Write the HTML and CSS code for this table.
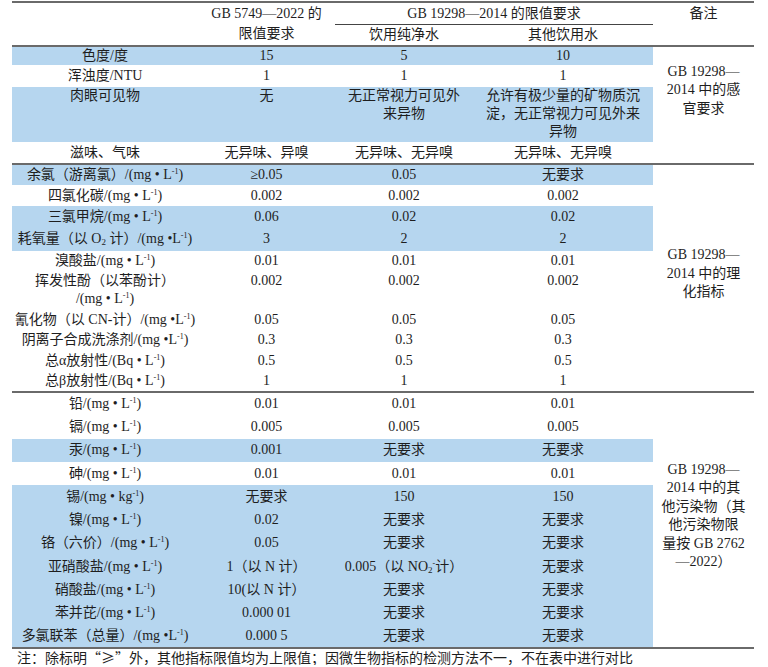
FILE: index.html
```html
<!DOCTYPE html>
<html lang="zh-CN">
<head>
<meta charset="utf-8">
<title>饮用水限值对比</title>
<link rel="stylesheet" href="styles.css">
</head>
<body>
<table class="cmp">
  <colgroup>
    <col class="c-item"><col class="c-gb5749"><col class="c-pure"><col class="c-other"><col class="c-note">
  </colgroup>
  <thead>
    <tr class="h1">
      <th rowspan="2"></th>
      <th rowspan="2" class="mid">GB 5749—2022 的<br>限值要求</th>
      <th colspan="2" class="group">GB 19298—2014 的限值要求</th>
      <th rowspan="2" class="top">备注</th>
    </tr>
    <tr class="h2">
      <th>饮用纯净水</th>
      <th>其他饮用水</th>
    </tr>
  </thead>
  <tbody class="grp">
    <tr class="blue r18"><td>色度/度</td><td>15</td><td>5</td><td>10</td>
      <td rowspan="3" class="remark">GB 19298—<br>2014 中的感<br>官要求</td></tr>
    <tr class="r22"><td>浑浊度/NTU</td><td>1</td><td>1</td><td>1</td></tr>
    <tr class="blue r55 topal"><td>肉眼可见物</td><td>无</td><td>无正常视力可见外<br>来异物</td><td>允许有极少量的矿物质沉<br>淀，无正常视力可见外来<br>异物</td></tr>
    <tr class="r22"><td>滋味、气味</td><td>无异味、异嗅</td><td>无异味、无异嗅</td><td>无异味、无异嗅</td><td class="remark"></td></tr>
  </tbody>
  <tbody class="grp">
    <tr class="blue r21"><td>余氯（游离氯）/(mg • L<sup>-1</sup>)</td><td>≥0.05</td><td>0.05</td><td>无要求</td>
      <td rowspan="10" class="remark">GB 19298—<br>2014 中的理<br>化指标</td></tr>
    <tr class="r21"><td>四氯化碳/(mg • L<sup>-1</sup>)</td><td>0.002</td><td>0.002</td><td>0.002</td></tr>
    <tr class="blue r21"><td>三氯甲烷/(mg • L<sup>-1</sup>)</td><td>0.06</td><td>0.02</td><td>0.02</td></tr>
    <tr class="blue r24"><td>耗氧量（以 O<sub>2</sub> 计）/(mg •L<sup>-1</sup>)</td><td>3</td><td>2</td><td>2</td></tr>
    <tr class="r19"><td>溴酸盐/(mg • L<sup>-1</sup>)</td><td>0.01</td><td>0.01</td><td>0.01</td></tr>
    <tr class="r40 topal2"><td>挥发性酚（以苯酚计）<br>/(mg • L<sup>-1</sup>)</td><td>0.002</td><td>0.002</td><td>0.002</td></tr>
    <tr class="r19"><td>氰化物（以 CN-计）/(mg •L<sup>-1</sup>)</td><td>0.05</td><td>0.05</td><td>0.05</td></tr>
    <tr class="r21"><td>阴离子合成洗涤剂/(mg •L<sup>-1</sup>)</td><td>0.3</td><td>0.3</td><td>0.3</td></tr>
    <tr class="r21"><td>总α放射性/(Bq • L<sup>-1</sup>)</td><td>0.5</td><td>0.5</td><td>0.5</td></tr>
    <tr class="r21"><td>总β放射性/(Bq • L<sup>-1</sup>)</td><td>1</td><td>1</td><td>1</td></tr>
  </tbody>
  <tbody class="grp">
    <tr class="r23"><td>铅/(mg • L<sup>-1</sup>)</td><td>0.01</td><td>0.01</td><td>0.01</td>
      <td rowspan="11" class="remark">GB 19298—<br>2014 中的其<br>他污染物（其<br>他污染物限<br>量按 GB 2762<br>—2022）</td></tr>
    <tr class="r23"><td>镉/(mg • L<sup>-1</sup>)</td><td>0.005</td><td>0.005</td><td>0.005</td></tr>
    <tr class="blue r23"><td>汞/(mg • L<sup>-1</sup>)</td><td>0.001</td><td>无要求</td><td>无要求</td></tr>
    <tr class="r23"><td>砷/(mg • L<sup>-1</sup>)</td><td>0.01</td><td>0.01</td><td>0.01</td></tr>
    <tr class="blue r23"><td>锡/(mg • kg<sup>-1</sup>)</td><td>无要求</td><td>150</td><td>150</td></tr>
    <tr class="blue r23"><td>镍/(mg • L<sup>-1</sup>)</td><td>0.02</td><td>无要求</td><td>无要求</td></tr>
    <tr class="blue r23"><td>铬（六价）/(mg • L<sup>-1</sup>)</td><td>0.05</td><td>无要求</td><td>无要求</td></tr>
    <tr class="blue r23"><td>亚硝酸盐/(mg • L<sup>-1</sup>)</td><td>1（以 N 计）</td><td>0.005（以 NO<sub>2</sub><sup>-</sup>计）</td><td>无要求</td></tr>
    <tr class="blue r23"><td>硝酸盐/(mg • L<sup>-1</sup>)</td><td>10(以 N 计）</td><td>无要求</td><td>无要求</td></tr>
    <tr class="blue r23"><td>苯并芘/(mg • L<sup>-1</sup>)</td><td>0.000 01</td><td>无要求</td><td>无要求</td></tr>
    <tr class="blue r23"><td>多氯联苯（总量）/(mg •L<sup>-1</sup>)</td><td>0.000 5</td><td>无要求</td><td>无要求</td></tr>
  </tbody>
</table>
<p class="note">注：除标明“≥”外，其他指标限值均为上限值；因微生物指标的检测方法不一，不在表中进行对比</p>
</body>
</html>
```
FILE: styles.css
```css
html, body {
  margin: 0;
  padding: 0;
  background: #ffffff;
}
body {
  font-family: "Liberation Serif", "Noto Sans CJK SC", serif;
  font-size: 14px;
  color: #1e1e1e;
}
.cmp {
  margin: 1px 0 0 12px;
  width: 742px;
  table-layout: fixed;
  border-collapse: collapse;
  border-top: 2px solid #6a6a6a;
  border-bottom: 2px solid #6a6a6a;
}
.c-item { width: 186px; }
.c-gb5749 { width: 137px; }
.c-pure { width: 138px; }
.c-other { width: 180px; }
.c-note { width: 101px; }

.cmp th, .cmp td {
  padding: 0;
  text-align: center;
  vertical-align: middle;
  white-space: nowrap;
  line-height: 18px;
  font-weight: normal;
}
.cmp thead th { line-height: 20px; }
.cmp thead .top { vertical-align: top; padding-top: 1px; }
.cmp thead .group {
  border-bottom: 1px solid #444444;
  padding-top: 1px;
}
.h1 { height: 22px; }
.h2 { height: 21px; }

.grp { border-top: 2px solid #6a6a6a; }

.blue td { background: #b6d6ef; }
.cmp td.remark {
  background: #ffffff;
  line-height: 18.5px;
  padding-bottom: 8px;
}

.r18 { height: 18px; }
.r19 { height: 19px; }
.r21 { height: 21px; }
.r22 { height: 22px; }
.r23 { height: 23.3px; }
.r24 { height: 24px; }
.r40 { height: 40px; }
.r55 { height: 55px; }

.topal td { vertical-align: top; }
.topal2 td { vertical-align: top; padding-top: 2px; }

sup {
  font-size: 8px;
  line-height: 0;
  vertical-align: 5px;
}
sub {
  font-size: 9px;
  line-height: 0;
  vertical-align: -2px;
}
.note {
  margin: 0 0 0 17px;
  font-family: "Noto Sans CJK SC", "Liberation Serif", sans-serif;
  font-size: 14px;
  line-height: 16px;
  color: #1e1e1e;
}
```
